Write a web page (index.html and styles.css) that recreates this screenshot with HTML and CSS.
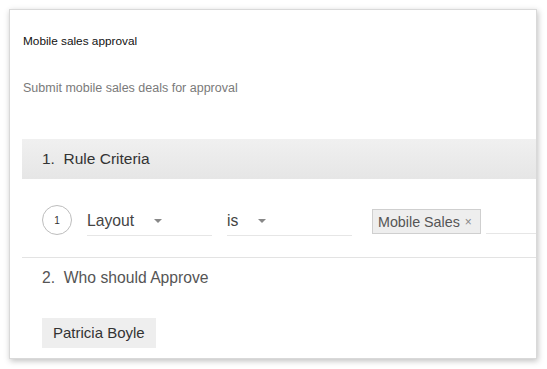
FILE: index.html
```html
<!DOCTYPE html>
<html lang="en">
  <head>
    <meta charset="UTF-8" />
    <meta name="viewport" content="width=device-width, initial-scale=1.0" />
    <title>Approval Rule</title>
    <link rel="stylesheet" href="styles.css">
  </head>
  <body>
    <div class="card">
      <h1 class="title">Mobile sales approval</h1>
      <p class="desc">Submit mobile sales deals for approval</p>

      <div class="band">1.&nbsp; Rule Criteria</div>

      <div class="criteria">
        <span class="num">1</span>
        <div class="field field-w">
          <span>Layout</span><span class="caret"></span>
        </div>
        <div class="field field-w">
          <span>is</span><span class="caret"></span>
        </div>
        <div class="tag">Mobile Sales <span class="x">&times;</span></div>
        <div class="field field-rest"></div>
      </div>

      <hr class="sep" />

      <h2 class="step">2.&nbsp; Who should Approve</h2>
      <div class="person">Patricia Boyle</div>
    </div>
  </body>
</html>
```

FILE: styles.css
```css
body {
  margin: 0;
  padding: 9px 9px 10px 9px;
  background-color: #fff;
  font-family: "Liberation Sans", Arial, sans-serif;
  color: #333;
}

.card {
  width: 528px;
  height: 350px;
  box-sizing: border-box;
  border: 1px solid #d9d9d9;
  background-color: #fff;
  box-shadow: rgba(0, 0, 0, 0.25) 1px 2px 6px 0px;
  padding: 23px 0 0 13px;
  overflow: hidden;
}

.title {
  margin: 0;
  font-size: 11.8px;
  font-weight: normal;
  line-height: 16px;
  color: #111;
}

.desc {
  margin: 30px 0 0 0;
  font-size: 12.5px;
  line-height: 18px;
  color: #7a7a7a;
}

.band {
  margin: 42px 0 0 -1px;
  height: 40px;
  line-height: 40px;
  padding-left: 20px;
  background: linear-gradient(#f0f0f0, #e6e6e6);
  font-size: 15.5px;
  color: #333;
}

.criteria {
  display: flex;
  align-items: flex-end;
  margin: 26px 0 0 19px;
  height: 31px;
}

.num {
  width: 28px;
  height: 28px;
  border: 1px solid #bdbdbd;
  border-radius: 50%;
  display: flex;
  align-items: center;
  justify-content: center;
  font-size: 10px;
  color: #333;
  margin-bottom: 1px;
}

.field {
  height: 30px;
  border-bottom: 1px solid #e6e6e6;
  display: flex;
  align-items: center;
  font-size: 15.7px;
  color: #444;
  box-sizing: border-box;
}

.field-w {
  width: 125px;
  margin-left: 15px;
}

.caret {
  width: 0;
  height: 0;
  border-left: 4px solid transparent;
  border-right: 4px solid transparent;
  border-top: 4px solid #888;
  margin-left: 20px;
}

.tag {
  margin: 0 0 2px 20px;
  height: 25px;
  box-sizing: border-box;
  padding: 0 8px 0 5px;
  border: 1px solid #cfcfcf;
  background-color: #eeeeee;
  display: flex;
  align-items: center;
  font-size: 14.3px;
  color: #555;
  white-space: nowrap;
}

.x {
  font-size: 12px;
  color: #888;
  margin-left: 5px;
}

.field-rest {
  flex: 1;
  margin-left: 5px;
  margin-bottom: 2px;
}

.sep {
  margin: 21px 0 0 -1px;
  border: none;
  border-top: 1px solid #e3e3e3;
  height: 0;
}

.step {
  margin: 10px 0 0 19px;
  font-size: 15.7px;
  font-weight: normal;
  line-height: 20px;
  color: #555;
}

.person {
  display: inline-block;
  margin: 30px 0 0 19px;
  height: 30px;
  line-height: 30px;
  padding: 0 11px;
  background-color: #eeeeee;
  font-size: 15px;
  color: #333;
}
```
